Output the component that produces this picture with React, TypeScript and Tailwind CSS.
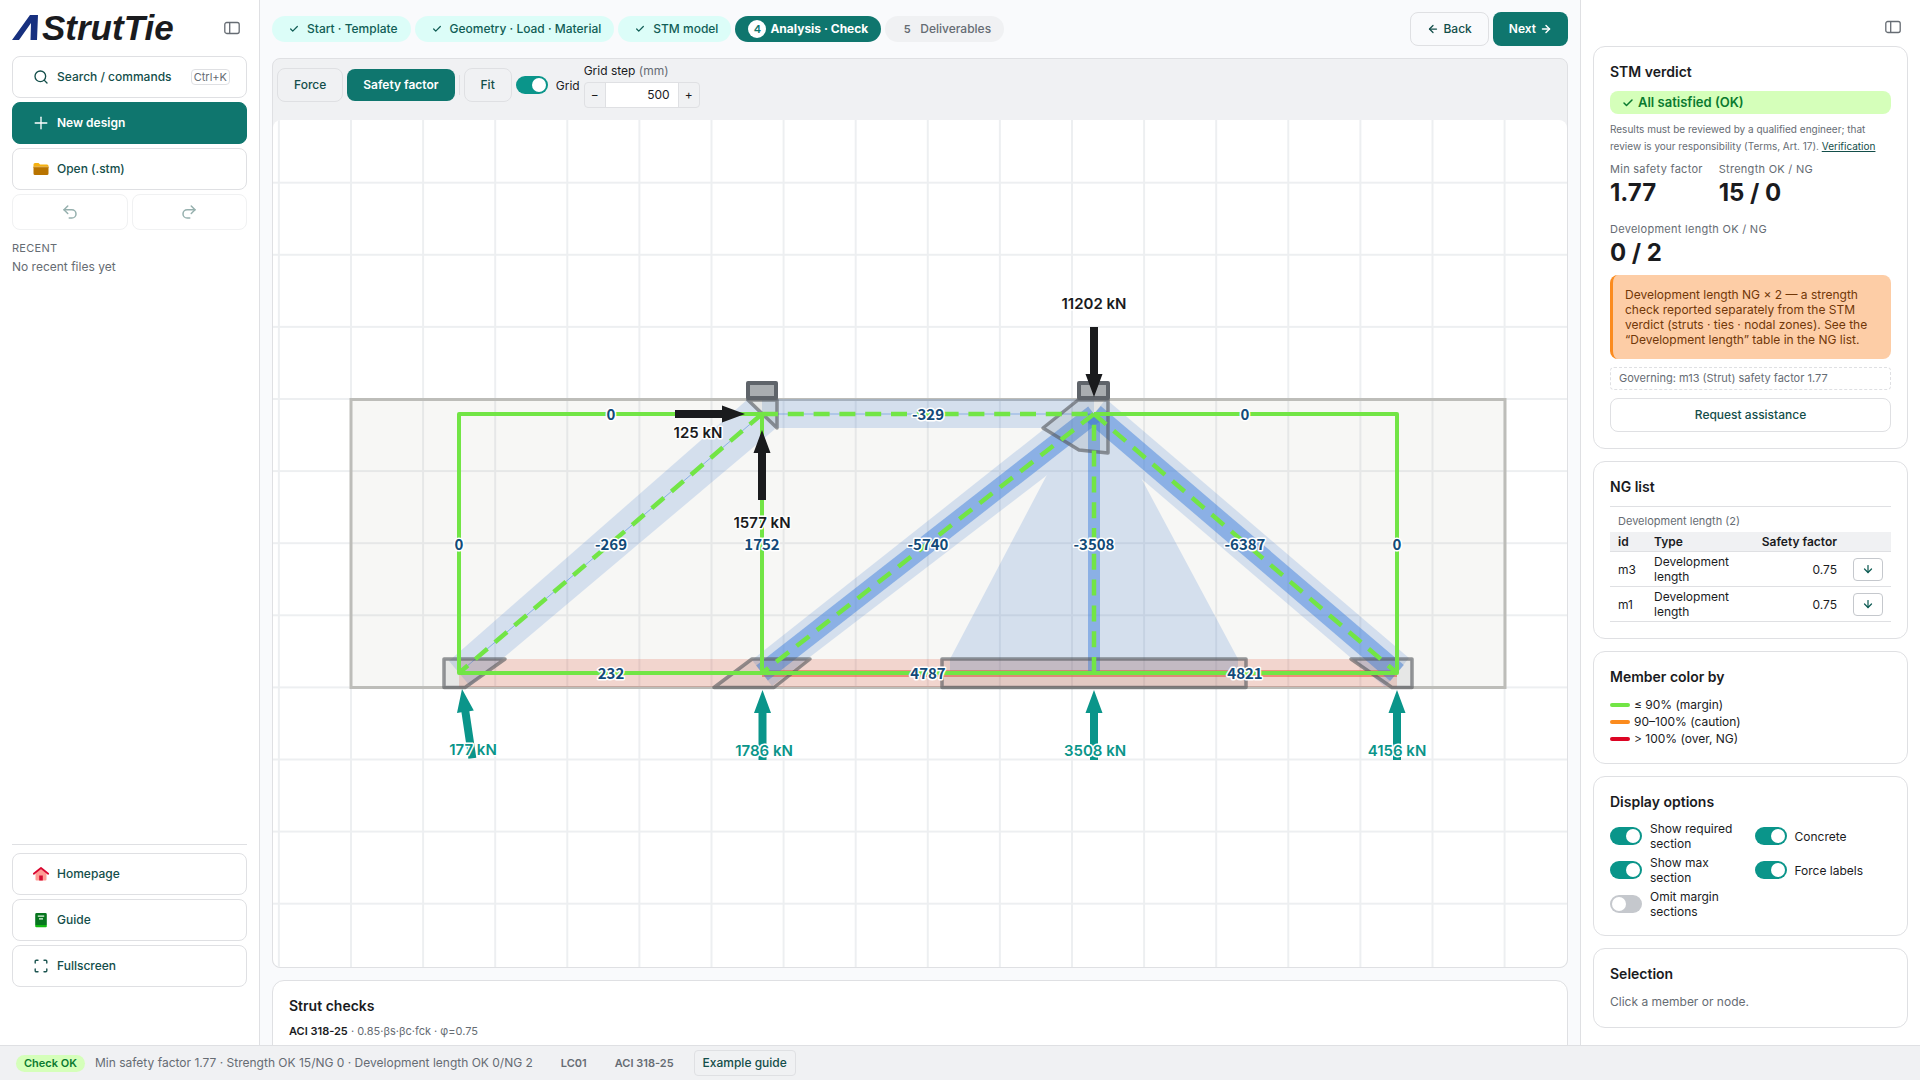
import React, { useState } from 'react';
import { ArrowDown, ArrowLeft, ArrowRight, Check, Plus, Redo2, Search, Undo2 } from 'lucide-react';

const STEPS = [
  { label: 'Start · Template', state: 'done' },
  { label: 'Geometry · Load · Material', state: 'done' },
  { label: 'STM model', state: 'done' },
  { label: 'Analysis · Check', state: 'active' },
  { label: 'Deliverables', state: 'todo' },
];

const NG_ROWS = [
  { id: 'm3', type: 'Development length', sf: '0.75' },
  { id: 'm1', type: 'Development length', sf: '0.75' },
];

const LEGEND = [
  { color: 'bg-[#72e545]', label: '≤ 90% (margin)' },
  { color: 'bg-[#fb8b1e]', label: '90–100% (caution)' },
  { color: 'bg-[#dc0424]', label: '> 100% (over, NG)' },
];

const Logo = () => (
  <svg viewBox="0 -4 176 40" className="h-10 w-44" role="img" aria-label="StrutTie">
    <path d="M0 28 L18 3 H26 L25 28 H18.5 L19 11 L7 28 Z" fill="#17307f" />
    <text x="30" y="28" fill="#1a1b1e" fontFamily="Liberation Sans, Arial, sans-serif" fontSize="35" fontWeight="700" fontStyle="italic">
      StrutTie
    </text>
  </svg>
);

const PanelIcon = () => (
  <svg viewBox="0 0 16 16" className="size-4" fill="none" stroke="#666c73" strokeWidth="1.3">
    <rect x="0.8" y="2.5" width="14.4" height="11" rx="2" />
    <path d="M5.7 2.5v11" />
  </svg>
);

const FolderIcon = () => (
  <svg viewBox="0 0 16 16" className="size-4">
    <path d="M0.5 3.5a1.5 1.5 0 0 1 1.5-1.5h3.5l1.6 1.6h6.9a1.5 1.5 0 0 1 1.5 1.5v2H0.5z" fill="#f5b111" />
    <path d="M0.5 6h15v6.5a1.5 1.5 0 0 1-1.5 1.5H2a1.5 1.5 0 0 1-1.5-1.5z" fill="#b97400" />
    <path d="M0.5 5.4h15v0.9h-15z" fill="#e2b566" />
  </svg>
);

const HomeIcon = () => (
  <svg viewBox="0 0 16 16" className="size-4">
    <path d="M2.5 7.5 8 2.8l5.5 4.7v6a1 1 0 0 1-1 1h-9a1 1 0 0 1-1-1z" fill="#ff9d95" />
    <path d="M6.2 9.5h3.6v5H6.2z" fill="#d60a32" />
    <path d="M0.8 7.8 8 2l7.2 5.8" fill="none" stroke="#d9062f" strokeWidth="1.8" strokeLinecap="round" strokeLinejoin="round" />
  </svg>
);

const BookIcon = () => (
  <svg viewBox="0 0 16 16" className="size-4">
    <path d="M2.2 2.4A1.4 1.4 0 0 1 3.6 1h8.8a1.4 1.4 0 0 1 1.4 1.4V13H2.2z" fill="#07761f" />
    <path d="M2.2 13h11.6v1.2a1 1 0 0 1-1 1H3.4a1.2 1.2 0 0 1-1.2-1.2z" fill="#12b912" />
    <path d="M4.8 4.2h6.4M6 6.8h4" stroke="#e6f7e6" strokeWidth="1.2" />
  </svg>
);

const FullscreenIcon = () => (
  <svg viewBox="0 0 16 16" className="size-4" fill="none" stroke="#1c5450" strokeWidth="1.4" strokeLinecap="round" strokeLinejoin="round">
    <path d="M2.2 5V3.2a1 1 0 0 1 1-1H5M11 2.2h1.8a1 1 0 0 1 1 1V5M13.8 11v1.8a1 1 0 0 1-1 1H11M5 13.8H3.2a1 1 0 0 1-1-1V11" />
  </svg>
);

const NavButton = ({ icon, label, primary, kbd }: { icon: React.ReactNode; label: string; primary?: boolean; kbd?: string }) => (
  <button
    type="button"
    className={`flex h-[42px] w-full items-center gap-2 rounded-lg border pl-5 pr-4 text-xs ${
      primary ? 'border-[#0f766e] bg-[#0f766e] font-semibold text-white' : 'border-[#dfe0e3] bg-white font-medium text-[#134e4a]'
    }`}
  >
    {icon}
    <span>{label}</span>
    {kbd && <kbd className="ml-auto rounded border border-[#dfe0e3] px-0.5 font-[Inter] text-[11px] leading-[14px] font-normal text-[#666c73]">{kbd}</kbd>}
  </button>
);

const Switch = ({ label, initial }: { label: string; initial: boolean }) => {
  const [on, setOn] = useState(initial);
  return (
    <label className="flex items-center gap-2 text-xs leading-[15px]">
      <input
        type="checkbox"
        role="switch"
        checked={on}
        onChange={(e) => setOn(e.target.checked)}
        className="h-[18px] w-8 shrink-0 appearance-none rounded-full bg-[#c5c8cd] p-0.5 before:block before:size-3.5 before:rounded-full before:bg-white before:content-[''] checked:bg-[#0a958a] checked:before:translate-x-3.5"
      />
      <span>{label}</span>
    </label>
  );
};

const Card = ({ title, children }: { title: string; children: React.ReactNode }) => (
  <section className="rounded-xl border border-[#dfe0e3] bg-white p-4">
    <h2 className="mb-2.5 text-sm leading-[18px] font-semibold">{title}</h2>
    {children}
  </section>
);

const Stat = ({ label, value }: { label: string; value: string }) => (
  <div>
    <dt className="text-[11px] leading-4 tracking-wide text-[#666c73]">{label}</dt>
    <dd className="text-2xl leading-8 font-bold">{value}</dd>
  </div>
);

// Arrow drawn along its own axis, tip at (x, y), pointing up when angle is 0
const Arrow = ({ x, y, angle = 0, color }: { x: number; y: number; angle?: number; color: string }) => (
  <path d="M0 0 L8.5 23 H4 V70 H-4 V23 H-8.5 Z" fill={color} transform={`translate(${x} ${y}) rotate(${angle})`} />
);

const ForceLabel = ({ x, y, children }: { x: number; y: number; children: string }) => (
  <text
    x={x}
    y={y}
    textAnchor="middle"
    fontFamily="Noto Sans CJK KR, sans-serif"
    fontSize="15"
    fontWeight="700"
    fill="#124a78"
    stroke="#fff"
    strokeWidth="3"
    strokeLinejoin="round"
    paintOrder="stroke"
  >
    {children}
  </text>
);

const LoadLabel = ({ x, y, color, children }: { x: number; y: number; color: string; children: string }) => (
  <text
    x={x}
    y={y}
    textAnchor="middle"
    fontFamily="Inter, sans-serif"
    fontSize="15"
    fontWeight="600"
    fill={color}
    stroke="#fff"
    strokeWidth="3"
    strokeLinejoin="round"
    paintOrder="stroke"
  >
    {children}
  </text>
);

const INK = '#1a1b1d';
const TEAL = '#0a958a';

const TrussDiagram = () => (
  <svg viewBox="273 120 1294 847" className="block h-auto w-full" role="img" aria-label="Strut and tie model">
    <defs>
      <pattern id="grid" x="350" y="398" width="72.1" height="72.1" patternUnits="userSpaceOnUse">
        <path d="M0 1H72.1M1 0V72.1" stroke="#edeff1" strokeWidth="2" />
      </pattern>
    </defs>
    <rect x="273" y="120" width="1294" height="847" fill="url(#grid)" />
    <rect x="351" y="399.5" width="1154" height="288" fill="#78785a" fillOpacity="0.06" stroke="#bdbdb9" strokeWidth="3" />

    {/* available sections */}
    <rect x="459" y="659" width="938" height="28" fill="#e0644c" opacity="0.23" />
    <g fill="#4d84d2" opacity="0.2">
      <path d="M449 661 L748 399 L775 429 L470 686 Z" />
      <rect x="762" y="399" width="332" height="29" />
      <path d="M752 660 L1082 399 L1106 430 L772 686 Z" />
      <path d="M1082 428 L1106 399 L1409 658 L1385 687 Z" />
      <path d="M1079 414 H1109 V418 L1238 659 V673 H950 V659 Z" />
    </g>

    {/* required sections */}
    <rect x="762" y="670" width="635" height="7" fill="#ec5f43" opacity="0.6" />
    <g stroke="#4182de" strokeOpacity="0.5">
      <path d="M762 414L459 673M762 414H1094" strokeWidth="1" />
      <path d="M1094 414L762 673" strokeWidth="19" />
      <path d="M1094 414L1397 673" strokeWidth="21" />
      <path d="M1094 414V673" strokeWidth="12" />
    </g>

    {/* nodal zones */}
    <g fill="#5a5f66" fillOpacity="0.1" stroke="#55585e" strokeOpacity="0.62" strokeWidth="3.5" strokeLinejoin="round">
      <path d="M444 659H505L465 687.5H444Z" />
      <path d="M752 659H810L774 687.5H714Z" />
      <path d="M942 659H1246V687.5H942Z" />
      <path d="M1351 659H1412V687.5H1392Z" />
      <path d="M748 400H777V428Z" />
      <path d="M1078 400H1108V453L1079 450L1043 428Z" />
    </g>
    <g fill="#a9adb0" stroke="#5f646a" strokeWidth="4" strokeLinejoin="round">
      <rect x="748" y="383" width="28" height="15" />
      <rect x="1079" y="383" width="29" height="15" />
    </g>

    {/* members */}
    <g fill="none" stroke="#72e545" strokeWidth="4" strokeLinejoin="round">
      <path d="M762 414H459V673H1397V414H1094" />
      <path d="M762 414V673" />
      <g strokeDasharray="16 9.8" strokeWidth="4.5">
        <path d="M762 414H1094" />
        <path d="M762 414L459 673" />
        <path d="M1094 414L762 673" />
        <path d="M1094 414L1397 673" />
        <path d="M1094 673V414" />
      </g>
    </g>

    <Arrow x={745} y={414} angle={90} color={INK} />
    <Arrow x={762} y={430} color={INK} />
    <Arrow x={1094} y={397} angle={180} color={INK} />
    <Arrow x={462} y={689} angle={-8.5} color={TEAL} />
    <Arrow x={762.5} y={690} color={TEAL} />
    <Arrow x={1094} y={690} color={TEAL} />
    <Arrow x={1397} y={690} color={TEAL} />

    <ForceLabel x={611} y={420}>0</ForceLabel>
    <ForceLabel x={459} y={550}>0</ForceLabel>
    <ForceLabel x={611} y={550}>-269</ForceLabel>
    <ForceLabel x={762} y={550}>1752</ForceLabel>
    <ForceLabel x={928} y={550}>-5740</ForceLabel>
    <ForceLabel x={1094} y={550}>-3508</ForceLabel>
    <ForceLabel x={1245} y={550}>-6387</ForceLabel>
    <ForceLabel x={1397} y={550}>0</ForceLabel>
    <ForceLabel x={928} y={420}>-329</ForceLabel>
    <ForceLabel x={1245} y={420}>0</ForceLabel>
    <ForceLabel x={611} y={679}>232</ForceLabel>
    <ForceLabel x={928} y={679}>4787</ForceLabel>
    <ForceLabel x={1245} y={679}>4821</ForceLabel>

    <LoadLabel x={698} y={438} color={INK}>125 kN</LoadLabel>
    <LoadLabel x={762} y={528} color={INK}>1577 kN</LoadLabel>
    <LoadLabel x={1094} y={309} color={INK}>11202 kN</LoadLabel>
    <LoadLabel x={473} y={755} color={TEAL}>177 kN</LoadLabel>
    <LoadLabel x={764} y={756} color={TEAL}>1786 kN</LoadLabel>
    <LoadLabel x={1095} y={756} color={TEAL}>3508 kN</LoadLabel>
    <LoadLabel x={1397} y={756} color={TEAL}>4156 kN</LoadLabel>
  </svg>
);

const LeftSidebar = () => (
  <aside className="flex w-[260px] shrink-0 flex-col border-r border-[#dfe0e3] bg-white px-3 pb-[58px] pt-3">
    <div className="flex h-8 items-center justify-between pr-[7px]">
      <Logo />
      <button type="button" aria-label="Collapse sidebar"><PanelIcon /></button>
    </div>
    <nav className="mt-3 flex flex-col gap-1">
      <NavButton icon={<Search className="size-4" strokeWidth={2} />} label="Search / commands" kbd="Ctrl+K" />
      <NavButton icon={<Plus className="-mx-0.5 size-5" strokeWidth={1.6} />} label="New design" primary />
      <NavButton icon={<FolderIcon />} label="Open (.stm)" />
      <div className="grid grid-cols-2 gap-1">
        <button type="button" disabled aria-label="Undo" className="flex h-9 items-center justify-center rounded-lg border border-[#f0f1f2] text-[#96b0ae]">
          <Undo2 className="size-[18px]" />
        </button>
        <button type="button" disabled aria-label="Redo" className="flex h-9 items-center justify-center rounded-lg border border-[#f0f1f2] text-[#96b0ae]">
          <Redo2 className="size-[18px]" />
        </button>
      </div>
    </nav>
    <h2 className="mt-2.5 text-[11px] leading-4 tracking-wide text-[#666c73]">RECENT</h2>
    <p className="mt-0.5 text-xs leading-[18px] text-[#666c73]">No recent files yet</p>
    <div className="mt-auto flex flex-col gap-1 border-t border-[#dfe0e3] pt-2">
      <NavButton icon={<HomeIcon />} label="Homepage" />
      <NavButton icon={<BookIcon />} label="Guide" />
      <NavButton icon={<FullscreenIcon />} label="Fullscreen" />
    </div>
  </aside>
);

const Stepper = () => (
  <header className="flex items-center justify-between">
    <ol className="flex gap-1">
      {STEPS.map((step, i) => (
        <li
          key={step.label}
          className={`flex h-[26px] items-center gap-1 rounded-full px-[13px] text-xs ${
            step.state === 'done'
              ? 'bg-[#dcfdf8] font-medium text-[#115e56]'
              : step.state === 'active'
                ? 'bg-[#0f766e] font-bold text-white'
                : 'bg-[#f0f1f3] font-medium text-[#666c73]'
          }`}
        >
          <span
            className={`flex size-[18px] items-center justify-center rounded-full text-[11px] font-semibold ${
              step.state === 'active' ? 'bg-white text-[#0f766e]' : ''
            }`}
          >
            {step.state === 'done' ? <Check className="size-2.5" strokeWidth={3} /> : i + 1}
          </span>
          {step.label}
        </li>
      ))}
    </ol>
    <div className="flex gap-1">
      <button type="button" className="flex h-[34px] items-center gap-1 rounded-lg border border-[#dfe0e3] px-4 text-xs font-medium text-[#134e4a]">
        <ArrowLeft className="size-3" strokeWidth={2.5} />
        Back
      </button>
      <button type="button" className="flex h-[34px] items-center gap-1 rounded-lg bg-[#0f766e] px-4 text-xs font-semibold text-white">
        Next
        <ArrowRight className="size-3" strokeWidth={3} />
      </button>
    </div>
  </header>
);

const Toolbar = () => {
  const [step, setStep] = useState('500');
  return (
    <div className="flex h-[61px] items-start gap-1 px-1 pt-1">
      <div className="flex h-11 items-center gap-1">
        <button type="button" className="h-[34px] rounded-lg border border-[#dfe0e3] px-4 text-xs font-medium text-[#134e4a]">Force</button>
        <button type="button" className="h-8 rounded-lg bg-[#0f766e] px-4 text-xs font-semibold text-white">Safety factor</button>
        <span className="h-5 w-px bg-[#dfe0e3]" />
        <button type="button" className="h-[34px] rounded-lg border border-[#dfe0e3] px-4 text-xs font-medium text-[#134e4a]">Fit</button>
        <Switch label="Grid" initial />
      </div>
      <div className="flex flex-col">
        <label htmlFor="grid-step" className="text-xs leading-4">
          Grid step <span className="text-[#666c73]">(mm)</span>
        </label>
        <div className="mt-[3px] flex h-[26px] w-[116px] overflow-hidden rounded border border-[#dfe0e3] text-xs">
          <button type="button" aria-label="Decrease" className="w-[21px] border-r border-[#dfe0e3]" onClick={() => setStep(String(Number(step) - 100))}>−</button>
          <input id="grid-step" value={step} onChange={(e) => setStep(e.target.value)} className="min-w-0 flex-1 bg-white px-2 text-right outline-none" />
          <button type="button" aria-label="Increase" className="w-[21px] border-l border-[#dfe0e3]" onClick={() => setStep(String(Number(step) + 100))}>+</button>
        </div>
      </div>
    </div>
  );
};

const RightSidebar = () => (
  <aside className="flex w-[340px] shrink-0 flex-col gap-3 overflow-hidden border-l border-[#dfe0e3] bg-white px-3 pt-[18px]">
    <div className="flex h-4 items-center justify-end pr-[7px] pt-0.5">
      <button type="button" aria-label="Collapse panel"><PanelIcon /></button>
    </div>

    <Card title="STM verdict">
      <p className="flex h-[23px] items-center gap-1 rounded-lg bg-[#d5ffba] px-3 text-[13px] font-semibold text-[#0a7a2f]">
        <Check className="size-3" strokeWidth={3} />
        All satisfied (OK)
      </p>
      <p className="mt-[7px] text-[10px] leading-[17px] text-[#666c73]">
        Results must be reviewed by a qualified engineer; that review is your responsibility (Terms, Art. 17).{' '}
        <a href="#verification" className="text-[#134e4a] underline">Verification</a>
      </p>
      <dl className="mt-1.5 flex flex-wrap gap-x-4 gap-y-3">
        <Stat label="Min safety factor" value="1.77" />
        <Stat label="Strength OK / NG" value="15 / 0" />
        <Stat label="Development length OK / NG" value="0 / 2" />
      </dl>
      <p className="mt-1.5 rounded-lg border-l-3 border-[#fb8b1e] bg-[#fdcda6] p-3 text-xs leading-[15px] text-[#713708]">
        Development length NG × 2 — a strength check reported separately from the STM verdict (struts · ties · nodal zones). See the “Development length” table in the NG list.
      </p>
      <p className="mt-2 rounded border border-dashed border-[#dfe0e3] px-2 text-[11px] leading-[21px] text-[#666c73]">
        Governing: m13 (Strut) safety factor 1.77
      </p>
      <button type="button" className="mt-2 h-[34px] w-full rounded-lg border border-[#dfe0e3] text-xs font-medium text-[#134e4a]">Request assistance</button>
    </Card>

    <Card title="NG list">
      <table className="w-full border-t border-[#dfe0e3] text-xs leading-[15px]">
        <thead>
          <tr>
            <th colSpan={4} className="h-[25px] px-2 pt-1 text-left text-[11px] font-normal text-[#666c73]">Development length (2)</th>
          </tr>
          <tr className="h-5 border-b border-[#dfe0e3] bg-[#f0f1f3] text-left">
            <th className="w-11 pl-2 font-semibold">id</th>
            <th className="font-semibold">Type</th>
            <th className="text-right font-semibold">Safety factor</th>
            <th className="w-[54px]" aria-label="Go to member" />
          </tr>
        </thead>
        <tbody>
          {NG_ROWS.map((row) => (
            <tr key={row.id} className="h-[35px] border-b border-[#dfe0e3]">
              <td className="pl-2">{row.id}</td>
              <td><div className="w-20">{row.type}</div></td>
              <td className="text-right">{row.sf}</td>
              <td className="pl-4 pr-2">
                <button type="button" aria-label={`Show ${row.id}`} className="flex h-[23px] w-[30px] items-center justify-center rounded border border-[#c5c8cd] text-[#115e56]">
                  <ArrowDown className="size-3" strokeWidth={2.5} />
                </button>
              </td>
            </tr>
          ))}
        </tbody>
      </table>
    </Card>

    <Card title="Member color by">
      <ul className="text-xs leading-[17px]">
        {LEGEND.map((item) => (
          <li key={item.label} className="flex items-center gap-1">
            <span className={`h-1 w-5 rounded-sm ${item.color}`} />
            {item.label}
          </li>
        ))}
      </ul>
    </Card>

    <Card title="Display options">
      <div className="grid grid-cols-2 gap-x-2 gap-y-1">
        <Switch label="Show required section" initial />
        <Switch label="Concrete" initial />
        <Switch label="Show max section" initial />
        <Switch label="Force labels" initial />
        <Switch label="Omit margin sections" initial={false} />
      </div>
    </Card>

    <Card title="Selection">
      <p className="text-xs leading-[18px] text-[#666c73]">Click a member or node.</p>
    </Card>
  </aside>
);

const StatusBar = () => (
  <footer className="flex h-[35px] shrink-0 items-center border-t border-[#dfe0e3] bg-[#f0f1f3] px-4 text-[#666c73]">
    <span className="rounded-full bg-[#d5ffba] px-2 text-[11px] leading-[17px] font-semibold text-[#0a7a2f]">Check OK</span>
    <span className="ml-2.5 text-xs">Min safety factor 1.77 · Strength OK 15/NG 0 · Development length OK 0/NG 2</span>
    <span className="ml-7 text-[11px] font-semibold">LC01</span>
    <span className="ml-7 text-[11px] font-semibold">ACI 318-25</span>
    <button type="button" className="ml-5 h-[26px] rounded border border-[#dfe0e3] px-2 text-xs font-medium text-[#134e4a]">Example guide</button>
  </footer>
);

export default function App() {
  return (
    <div className="flex h-screen flex-col overflow-hidden bg-[#f9fafc] font-[Inter,sans-serif] text-[#1a1b1e]">
      <div className="flex min-h-0 flex-1">
        <LeftSidebar />
        <main className="flex min-w-0 flex-1 flex-col gap-3 overflow-hidden p-3 pb-0">
          <Stepper />
          <section className="shrink-0 overflow-hidden rounded-lg border border-[#dfe0e3] bg-[#f0f1f3]">
            <Toolbar />
            <div className="overflow-hidden rounded-lg bg-white">
              <TrussDiagram />
            </div>
          </section>
          <section className="shrink-0 rounded-xl border border-[#dfe0e3] bg-white p-4">
            <h2 className="text-sm leading-[18px] font-semibold">Strut checks</h2>
            <p className="mt-2 text-[11px] leading-[17px] text-[#666c73]">
              <strong className="font-semibold text-[#1a1b1e]">ACI 318-25</strong> · 0.85·βs·βc·fck · φ=0.75
            </p>
          </section>
        </main>
        <RightSidebar />
      </div>
      <StatusBar />
    </div>
  );
}
